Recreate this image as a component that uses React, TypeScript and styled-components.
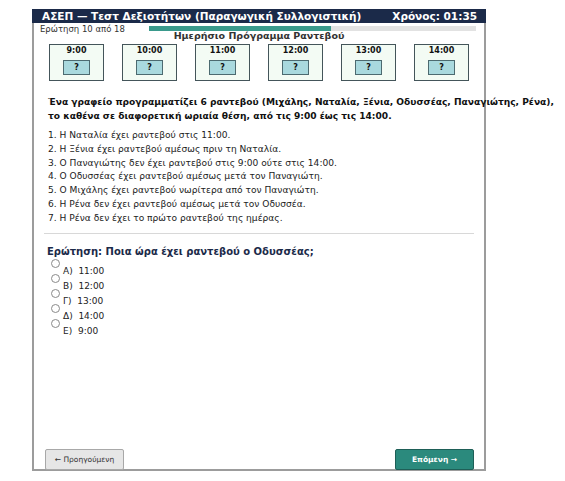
import React from "react";
import styled, { createGlobalStyle } from "styled-components";

const GlobalStyle = createGlobalStyle`
  html, body {
    margin: 0;
    padding: 0;
    background: #ffffff;
  }
  body {
    font-family: "DejaVu Sans", "Noto Sans", sans-serif;
    color: #222;
  }
`;

const Frame = styled.div`
  box-sizing: border-box;
  width: 454px;
  height: 462px;
  margin: 9px 0 0 32px;
  border: 2px solid #9c9c9c;
  border-top: none;
  display: flex;
  flex-direction: column;
`;

const Header = styled.div`
  margin: 0 -2px;
  height: 14px;
  background: #1b2a49;
  color: #ffffff;
  font-weight: bold;
  font-size: 10.5px;
  line-height: 14px;
  display: flex;
  justify-content: space-between;
  padding: 0 9px 0 10px;
`;

const MetaRow = styled.div`
  height: 6px;
  display: flex;
  align-items: flex-start;
  padding: 1px 8px 0 6px;
`;

const Counter = styled.span`
  font-size: 8.5px;
  line-height: 10px;
  color: #333;
  width: 109px;
  flex: none;
`;

const Track = styled.div`
  flex: 1;
  height: 5px;
  margin-top: 2px;
  background: #e2e2e2;
`;

const Fill = styled.div`
  height: 100%;
  background: #3a9a8c;
`;

const Title = styled.div`
  text-align: center;
  font-size: 9.5px;
  font-weight: bold;
  line-height: 12px;
  color: #333;
`;

const Slots = styled.div`
  display: flex;
  justify-content: center;
  gap: 18px;
  margin-top: 2px;
`;

const Slot = styled.div`
  box-sizing: border-box;
  width: 55px;
  height: 37px;
  border: 1.5px solid #44555a;
  background: #f3fbf4;
  display: flex;
  flex-direction: column;
  align-items: center;
`;

const SlotTime = styled.div`
  font-size: 8px;
  font-weight: bold;
  line-height: 10px;
  margin-top: 1px;
  color: #111;
`;

const SlotValue = styled.div`
  box-sizing: border-box;
  width: 27px;
  height: 15px;
  margin-top: 4px;
  border: 1px solid #4c6a70;
  background: #a9d9de;
  font-size: 8px;
  font-weight: bold;
  line-height: 13px;
  text-align: center;
  color: #111;
`;

const Body = styled.div`
  padding: 0 10px;
  display: flex;
  flex-direction: column;
`;

const Problem = styled.p`
  margin: 14px 0 0 4px;
  font-size: 9.1px;
  font-weight: bold;
  line-height: 14px;
  white-space: nowrap;
  color: #111;
`;

const Clues = styled.ol`
  margin: 6px 0 0 4px;
  padding: 0;
  list-style: none;
  font-size: 9.1px;
  line-height: 13.8px;
  color: #222;
`;

const Divider = styled.hr`
  margin: 7px 0 0 0;
  border: none;
  border-top: 1px solid #d8d8d8;
  height: 0;
`;

const Question = styled.div`
  margin: 12px 0 0 3px;
  font-size: 10px;
  font-weight: bold;
  line-height: 12px;
  color: #1b2a49;
`;

const Options = styled.div`
  margin: 1px 0 0 7px;
  display: flex;
  flex-direction: column;
`;

const Option = styled.label`
  display: flex;
  align-items: flex-start;
  height: 15px;
  font-size: 9px;
  color: #222;
`;

const Radio = styled.span`
  box-sizing: border-box;
  width: 9px;
  height: 9px;
  border: 1px solid #8a8a8a;
  border-radius: 50%;
  background: #fff;
  flex: none;
`;

const OptionText = styled.span`
  margin: 7px 0 0 3px;
  line-height: 11px;
  white-space: pre;
`;

const Footer = styled.div`
  margin-top: auto;
  margin-bottom: -1px;
  display: flex;
  justify-content: space-between;
  padding: 0 10px 0 11px;
`;

const NavButton = styled.button<{ $primary?: boolean }>`
  box-sizing: border-box;
  width: 79px;
  height: 21px;
  border-radius: 2px;
  font-family: "DejaVu Sans", sans-serif;
  font-size: 7.5px;
  font-weight: ${(p) => (p.$primary ? "bold" : "normal")};
  color: ${(p) => (p.$primary ? "#ffffff" : "#333333")};
  background: ${(p) => (p.$primary ? "#2b8a7d" : "#e6e6e6")};
  border: 1px solid ${(p) => (p.$primary ? "#1e5f57" : "#a8a8a8")};
  padding: 0;
  cursor: pointer;
`;

const times = ["9:00", "10:00", "11:00", "12:00", "13:00", "14:00"];

const clues = [
  "1. Η Ναταλία έχει ραντεβού στις 11:00.",
  "2. Η Ξένια έχει ραντεβού αμέσως πριν τη Ναταλία.",
  "3. Ο Παναγιώτης δεν έχει ραντεβού στις 9:00 ούτε στις 14:00.",
  "4. Ο Οδυσσέας έχει ραντεβού αμέσως μετά τον Παναγιώτη.",
  "5. Ο Μιχάλης έχει ραντεβού νωρίτερα από τον Παναγιώτη.",
  "6. Η Ρένα δεν έχει ραντεβού αμέσως μετά τον Οδυσσέα.",
  "7. Η Ρένα δεν έχει το πρώτο ραντεβού της ημέρας.",
];

const options = ["Α)  11:00", "Β)  12:00", "Γ)  13:00", "Δ)  14:00", "Ε)  9:00"];

export default function App() {
  const current = 10;
  const total = 18;
  return (
    <>
      <GlobalStyle />
      <Frame>
        <Header>
          <span>ΑΣΕΠ — Τεστ Δεξιοτήτων (Παραγωγική Συλλογιστική)</span>
          <span>Χρόνος: 01:35</span>
        </Header>
        <MetaRow>
          <Counter>
            Ερώτηση {current} από {total}
          </Counter>
          <Track>
            <Fill style={{ width: `${(current / total) * 100}%` }} />
          </Track>
        </MetaRow>
        <Title>Ημερήσιο Πρόγραμμα Ραντεβού</Title>
        <Slots>
          {times.map((t) => (
            <Slot key={t}>
              <SlotTime>{t}</SlotTime>
              <SlotValue>?</SlotValue>
            </Slot>
          ))}
        </Slots>
        <Body>
          <Problem>
            Ένα γραφείο προγραμματίζει 6 ραντεβού (Μιχάλης, Ναταλία, Ξένια, Οδυσσέας, Παναγιώτης, Ρένα),
            <br />
            το καθένα σε διαφορετική ωριαία θέση, από τις 9:00 έως τις 14:00.
          </Problem>
          <Clues>
            {clues.map((c) => (
              <li key={c}>{c}</li>
            ))}
          </Clues>
          <Divider />
          <Question>Ερώτηση: Ποια ώρα έχει ραντεβού ο Οδυσσέας;</Question>
          <Options>
            {options.map((o) => (
              <Option key={o}>
                <Radio />
                <OptionText>{o}</OptionText>
              </Option>
            ))}
          </Options>
        </Body>
        <Footer>
          <NavButton>← Προηγούμενη</NavButton>
          <NavButton $primary>Επόμενη →</NavButton>
        </Footer>
      </Frame>
    </>
  );
}
